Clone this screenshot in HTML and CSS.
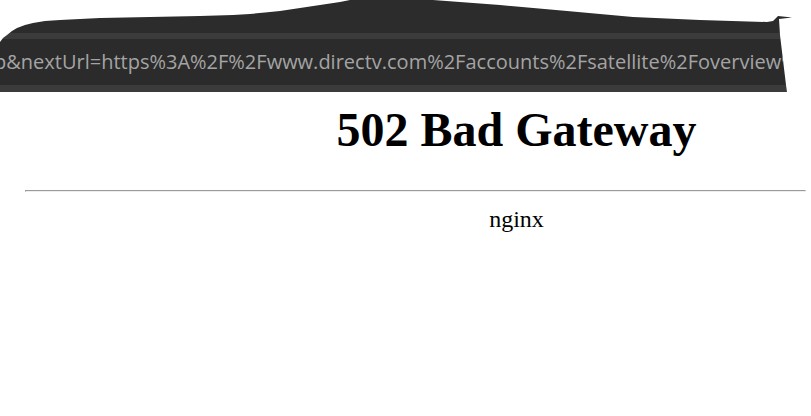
FILE: index.html
```html
<!DOCTYPE html>
<html lang="en">
<head>
<meta charset="utf-8">
<title>502 Bad Gateway</title>
<link rel="stylesheet" href="styles.css">
</head>
<body>
<div class="torn-bar">
  <div class="bar-top"></div>
  <div class="bar-stripe"></div>
  <div class="bar-url"><span class="url-text">p&amp;nextUrl=https%3A%2F%2Fwww.directv.com%2Faccounts%2Fsatellite%2Foverview%2F</span></div>
  <div class="bar-stripe bar-stripe-bottom"></div>
</div>
<div class="content">
  <h1 class="title">502 Bad Gateway</h1>
  <hr class="rule">
  <div class="server">nginx</div>
</div>
</body>
</html>
```

FILE: styles.css
```css
html, body {
  margin: 0;
  padding: 0;
  overflow: hidden;
  background: #ffffff;
}

.torn-bar {
  height: 92px;
  display: flex;
  flex-direction: column;
  clip-path: polygon(0px 92px, 0px 42px, 3px 38px, 7px 35px, 12px 31px, 17px 28px, 25px 25px, 33px 23px, 45px 21px, 60px 20px, 100px 18px, 150px 17px, 200px 16px, 233px 15px, 250px 14px, 265px 12.5px, 280px 11px, 300px 8px, 320px 5px, 340px 2px, 350px 0px, 433px 0px, 500px 5px, 567px 11px, 633px 17px, 700px 20px, 767px 22px, 773px 21px, 778px 16px, 792px 17.5px, 779px 19px, 780px 35px, 783px 60px, 786px 85px, 787px 92px);
}

.bar-top {
  height: 33px;
  background: #2c2c2c;
}

.bar-stripe {
  height: 6px;
  background: #3b3b3b;
}

.bar-stripe-bottom {
  height: 7px;
}

.bar-url {
  height: 46px;
  background: #2b2b2b;
  display: flex;
  align-items: center;
  overflow: hidden;
  white-space: nowrap;
}

.url-text {
  margin-left: -6px;
  font-family: "Open Sans", "Noto Sans", sans-serif;
  font-size: 20px;
  color: #a4a4a4;
  line-height: 26px;
}

.content {
  padding-left: 25px;
}

.title {
  width: 983px;
  margin: 10px 0 32px 0;
  font-family: "Liberation Serif", "Times New Roman", serif;
  font-weight: bold;
  font-size: 48px;
  line-height: 56px;
  text-align: center;
  color: #000;
}

.rule {
  width: 779px;
  height: 0;
  margin: 0;
  border: 0;
  border-top: 1px solid #9a9a9a;
  border-bottom: 1px solid #eeeeee;
  border-right: 1px solid #eeeeee;
  border-left: 1px solid #9a9a9a;
}

.server {
  width: 983px;
  margin-top: 13px;
  font-family: "Liberation Serif", "Times New Roman", serif;
  font-size: 24px;
  line-height: 28px;
  text-align: center;
  color: #000;
}
```
